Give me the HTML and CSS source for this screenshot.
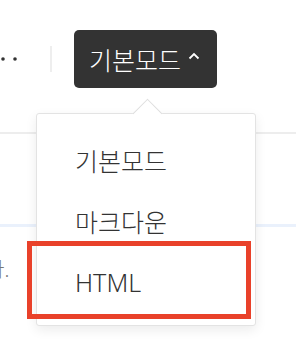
FILE: index.html
```html
<!DOCTYPE html>
<html lang="ko">
<head>
  <meta charset="UTF-8">
  <meta name="viewport" content="width=device-width, initial-scale=1.0">
  <title>에디터 모드</title>
  <link rel="stylesheet" href="styles.css">
</head>
<body>
  <div class="toolbar">
    <svg class="more" width="20" height="6" viewBox="0 0 20 6">
      <circle cx="3" cy="3" r="1.8" fill="#333"/>
      <circle cx="15" cy="3" r="1.8" fill="#333"/>
    </svg>
    <span class="divider"></span>
    <button class="mode-button">
      기본모드
      <svg class="caret" width="12" height="8" viewBox="0 0 12 8">
        <path d="M1.5 6.5 L6 2 L10.5 6.5" fill="none" stroke="#fff" stroke-width="1.8"/>
      </svg>
    </button>

    <!-- 모드 선택 메뉴 -->
    <ul class="mode-menu">
      <li class="mode-item">기본모드</li>
      <li class="mode-item">마크다운</li>
      <li class="mode-item">HTML</li>
    </ul>
    <div class="highlight"></div>
  </div>

  <div class="editor-area"></div>
  <p class="editor-text"><span>다.</span></p>
</body>
</html>
```

FILE: styles.css
```css
/* 페이지 기본 */
html,
body {
  height: 100%;
}

body {
  margin: 0;
  background-color: white;
  font-family: "Noto Sans", "Noto Sans CJK KR", sans-serif;
  font-weight: 300;
}

/* 상단 툴바 */
.toolbar {
  position: relative;
  display: flex;
  align-items: flex-start;
  height: 102px;
  padding-top: 30px;
  border-bottom: 2px solid #ededed;
}

.more {
  margin-top: 26px;
}

.divider {
  width: 2px;
  height: 26px;
  margin-top: 16px;
  margin-left: 30px;
  background-color: #eeeeee;
}

/* 모드 버튼 */
.mode-button {
  display: flex;
  align-items: center;
  gap: 7px;
  height: 58px;
  margin-left: 22px;
  padding: 0 17px 0 15px;
  border: none;
  border-radius: 5px;
  background-color: #333333;
  color: white;
  font-family: inherit;
  font-weight: inherit;
  font-size: 25px;
}

.caret {
  margin-top: -6px;
}

/* 드롭다운 메뉴 */
.mode-menu {
  position: absolute;
  top: 113px;
  left: 36px;
  z-index: 10;
  width: 220px;
  height: 213px;
  margin: 0;
  padding: 15px 0 0 0;
  box-sizing: border-box;
  list-style: none;
  background-color: white;
  border: 1px solid #e3e3e3;
  border-radius: 3px;
  box-shadow: 0 4px 12px rgba(0, 0, 0, 0.08);
}

/* 위쪽 화살표 */
.mode-menu::before {
  content: "";
  position: absolute;
  top: -11px;
  left: 100px;
  width: 20px;
  height: 20px;
  background-color: white;
  border-top: 1px solid #dedede;
  border-left: 1px solid #dedede;
  transform: rotate(45deg);
}

.mode-item {
  position: relative;
  display: flex;
  align-items: center;
  height: 61px;
  padding-left: 38px;
  color: #333333;
  font-size: 25px;
}

/* 강조 표시 박스 */
.highlight {
  position: absolute;
  top: 241px;
  left: 27px;
  z-index: 11;
  width: 214px;
  height: 68px;
  border: 5px solid #e9412a;
}

/* 본문 영역 */
.editor-area {
  height: 90px;
  border-bottom: 3px solid #eaf1fc;
}

.editor-text {
  margin: 27px 0 0 0;
  color: #777777;
  font-size: 20px;
}

.editor-text span {
  margin-left: -14px;
}
```
